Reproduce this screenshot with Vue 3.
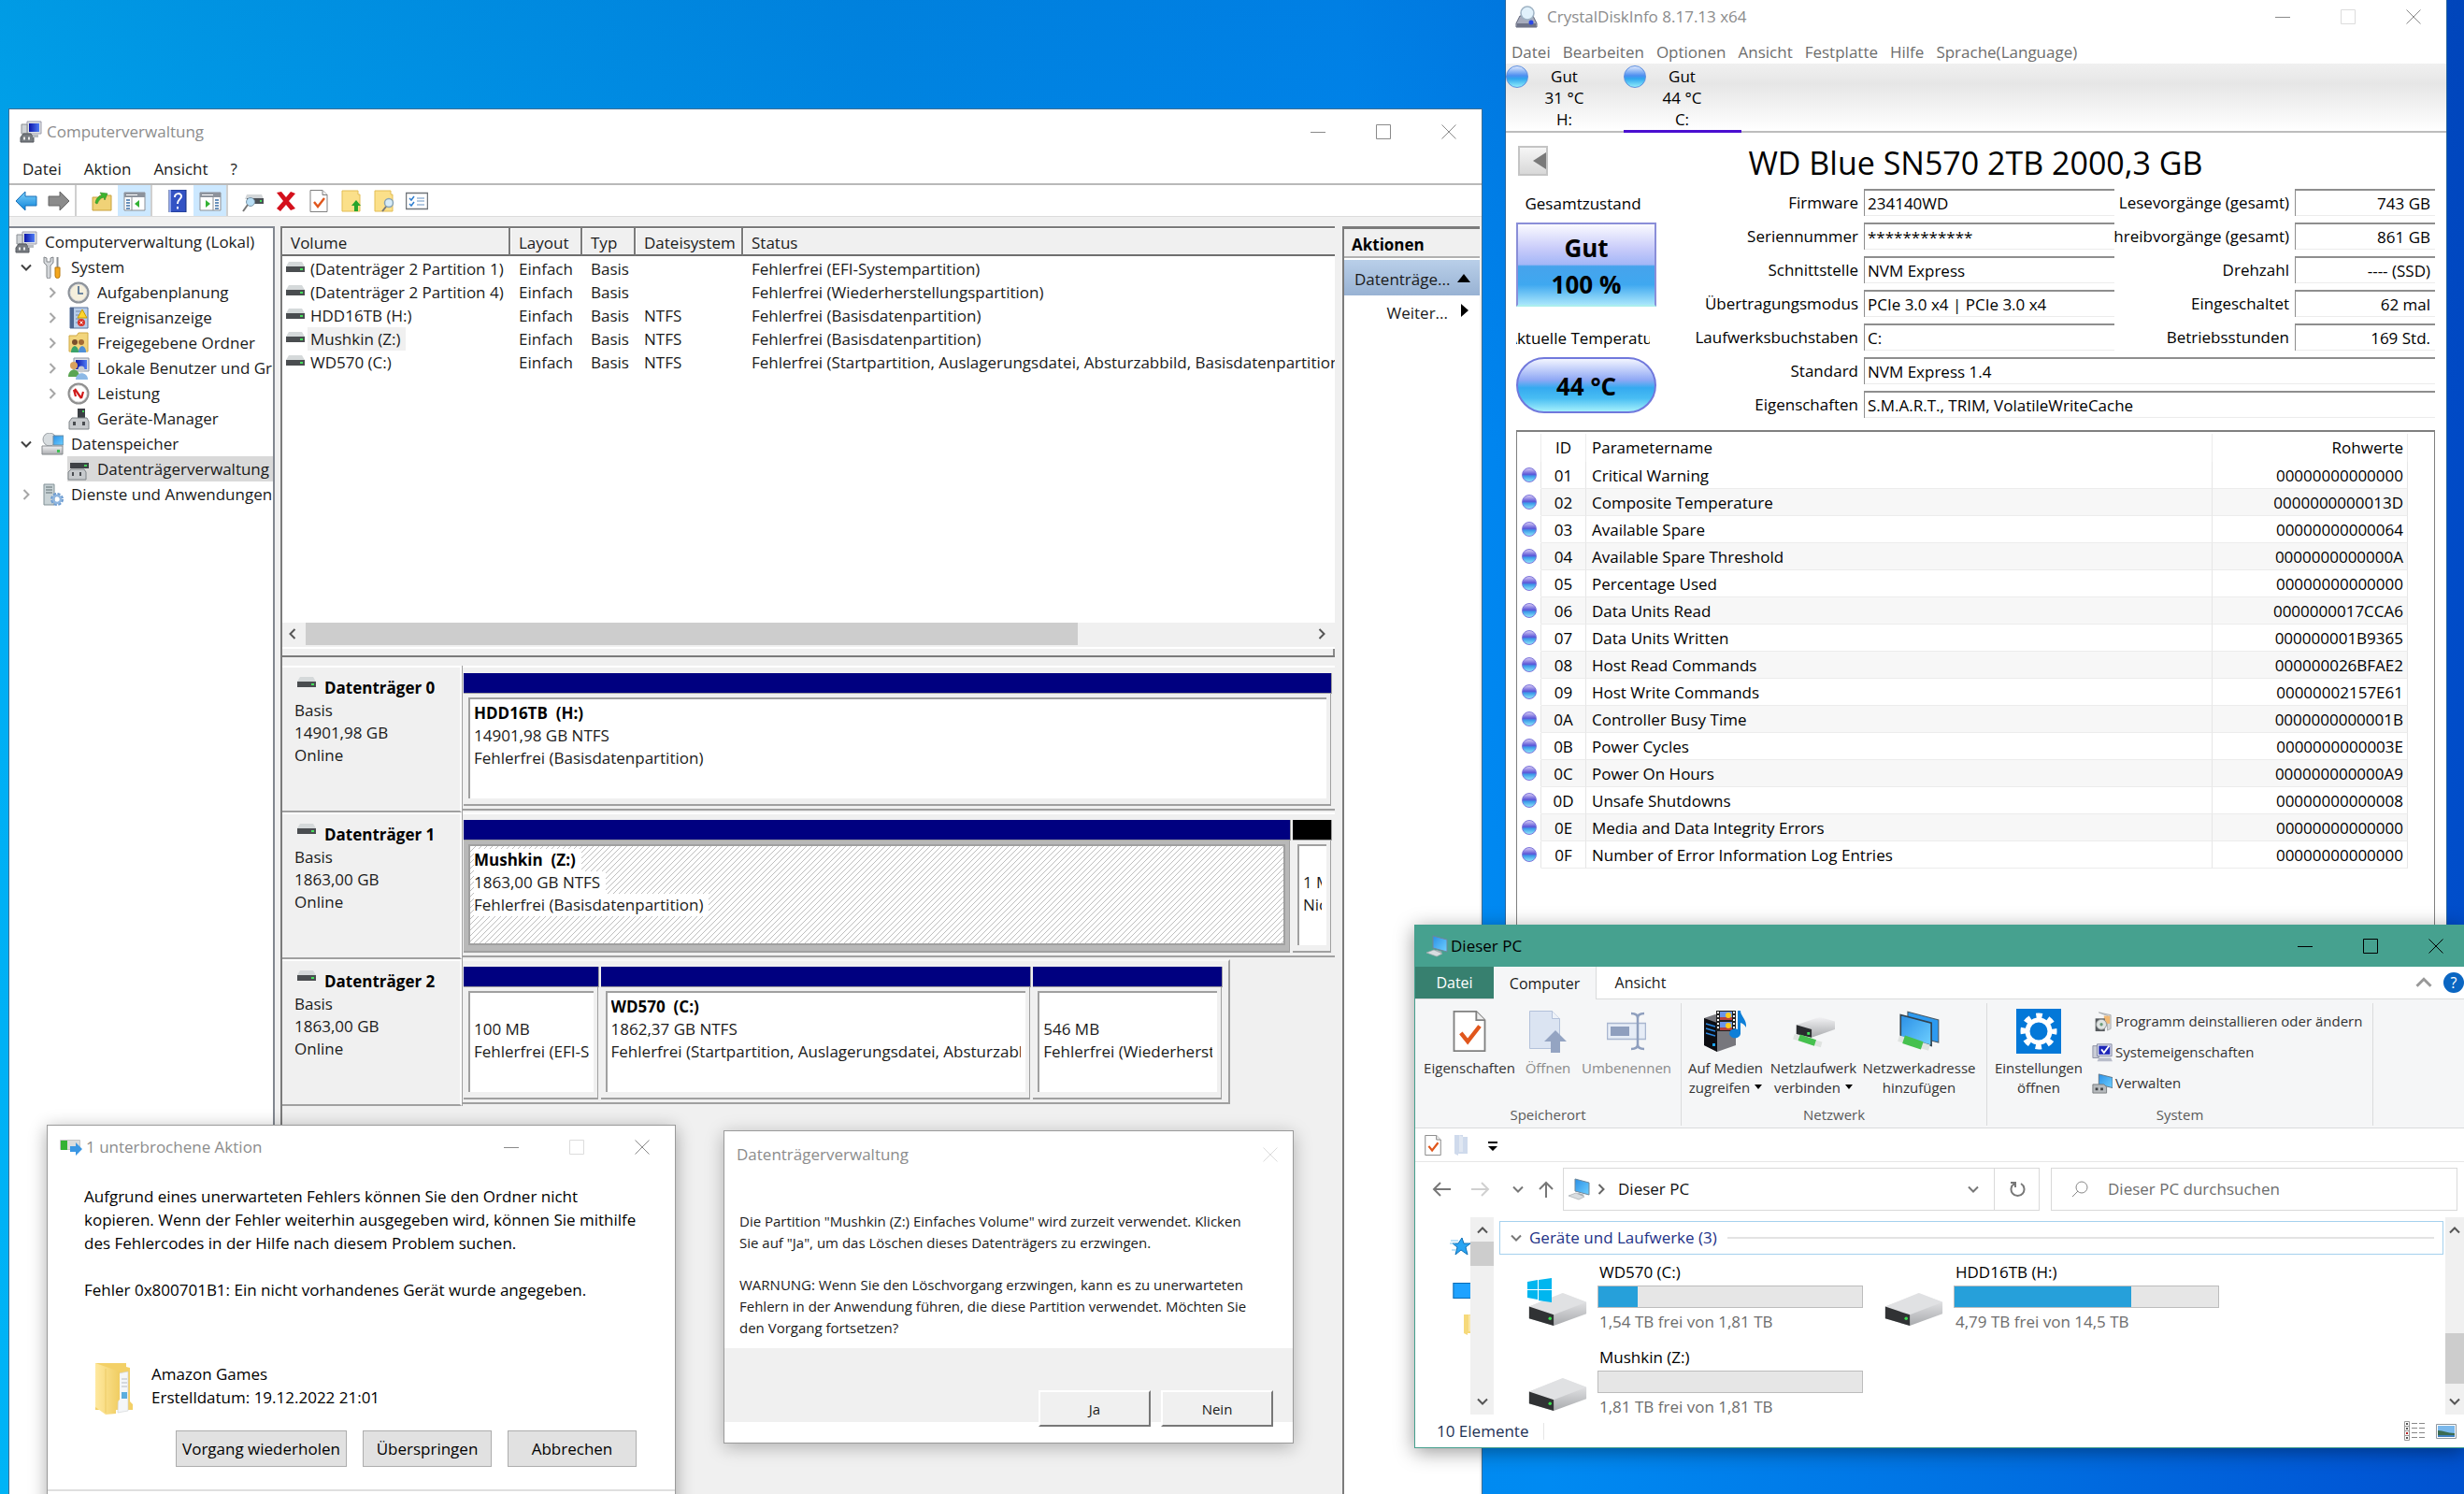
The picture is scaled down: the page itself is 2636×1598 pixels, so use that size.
<script setup>
const toolbar = [
  { icon: 'back', label: 'Zurück' },
  { icon: 'forward', label: 'Vorwärts', end: true },
  { icon: 'folder-up', label: 'Aufwärts' },
  { icon: 'panel-left', label: 'Konsolenstruktur', on: true, end: true },
  { icon: 'help', label: 'Hilfe' },
  { icon: 'panel-right', label: 'Aktionsbereich', on: true, end: true },
  { icon: 'disk-scan', label: 'Datenträger neu einlesen' },
  { icon: 'delete', label: 'Löschen' },
  { icon: 'doc-check', label: 'Eigenschaften' },
  { icon: 'folder-send', label: 'Öffnen' },
  { icon: 'folder-find', label: 'Durchsuchen' },
  { icon: 'checklist', label: 'Einstellungen' },
]

const tree = [
  { text: 'Computerverwaltung (Lokal)', icon: 'pc-manage', level: 0 },
  { text: 'System', icon: 'tools', level: 1, state: 'open' },
  { text: 'Aufgabenplanung', icon: 'clock', level: 2, state: 'closed' },
  { text: 'Ereignisanzeige', icon: 'events', level: 2, state: 'closed' },
  { text: 'Freigegebene Ordner', icon: 'shared', level: 2, state: 'closed' },
  { text: 'Lokale Benutzer und Gruppen', icon: 'users', level: 2, state: 'closed' },
  { text: 'Leistung', icon: 'perf', level: 2, state: 'closed' },
  { text: 'Geräte-Manager', icon: 'devices', level: 2 },
  { text: 'Datenspeicher', icon: 'storage', level: 1, state: 'open' },
  { text: 'Datenträgerverwaltung', icon: 'disk-manage', level: 2, selected: true },
  { text: 'Dienste und Anwendungen', icon: 'services', level: 1, state: 'closed' },
]

const volumes = [
  { name: '(Datenträger 2 Partition 1)', fs: '', status: 'Fehlerfrei (EFI-Systempartition)' },
  { name: '(Datenträger 2 Partition 4)', fs: '', status: 'Fehlerfrei (Wiederherstellungspartition)' },
  { name: 'HDD16TB (H:)', fs: 'NTFS', status: 'Fehlerfrei (Basisdatenpartition)' },
  { name: 'Mushkin (Z:)', fs: 'NTFS', status: 'Fehlerfrei (Basisdatenpartition)', selected: true },
  { name: 'WD570 (C:)', fs: 'NTFS', status: 'Fehlerfrei (Startpartition, Auslagerungsdatei, Absturzabbild, Basisdatenpartition)' },
]

const disks = [
  {
    name: 'Datenträger 0', size: '14901,98 GB', share: 100,
    parts: [{ title: 'HDD16TB  (H:)', size: '14901,98 GB NTFS', state: 'Fehlerfrei (Basisdatenpartition)', grow: 1 }],
  },
  {
    name: 'Datenträger 1', size: '1863,00 GB', share: 100,
    parts: [
      { title: 'Mushkin  (Z:)', size: '1863,00 GB NTFS', state: 'Fehlerfrei (Basisdatenpartition)', grow: 882, active: true },
      { title: '', size: '1 MB', state: 'Nicht zugeordnet', grow: 41, free: true },
    ],
  },
  {
    name: 'Datenträger 2', size: '1863,00 GB', share: 88,
    parts: [
      { title: '', size: '100 MB', state: 'Fehlerfrei (EFI-Systempartition)', grow: 143 },
      { title: 'WD570  (C:)', size: '1862,37 GB NTFS', state: 'Fehlerfrei (Startpartition, Auslagerungsdatei, Absturzabbild)', grow: 458 },
      { title: '', size: '546 MB', state: 'Fehlerfrei (Wiederherstellungspartition)', grow: 201 },
    ],
  },
]

const crystalMenu = ['Datei', 'Bearbeiten', 'Optionen', 'Ansicht', 'Festplatte', 'Hilfe', 'Sprache(Language)']
const crystalDisks = [
  { temp: '31 °C', letter: 'H:' },
  { temp: '44 °C', letter: 'C:', active: true },
]
const facts = [
  { id: 'fw', label: 'Firmware', value: '234140WD', id2: 'rd', label2: 'Lesevorgänge (gesamt)', value2: '743 GB' },
  { id: 'sn', label: 'Seriennummer', value: '************', id2: 'wr', label2: 'Schreibvorgänge (gesamt)', value2: '861 GB' },
  { id: 'if', label: 'Schnittstelle', value: 'NVM Express', id2: 'rpm', label2: 'Drehzahl', value2: '---- (SSD)' },
  { id: 'tm', label: 'Übertragungsmodus', value: 'PCIe 3.0 x4 | PCIe 3.0 x4', id2: 'on', label2: 'Eingeschaltet', value2: '62 mal' },
  { id: 'dl', label: 'Laufwerksbuchstaben', value: 'C:', id2: 'hr', label2: 'Betriebsstunden', value2: '169 Std.' },
  { id: 'std', label: 'Standard', value: 'NVM Express 1.4' },
  { id: 'ft', label: 'Eigenschaften', value: 'S.M.A.R.T., TRIM, VolatileWriteCache' },
]
const smart = [
  ['01', 'Critical Warning', '00000000000000'],
  ['02', 'Composite Temperature', '0000000000013D'],
  ['03', 'Available Spare', '00000000000064'],
  ['04', 'Available Spare Threshold', '0000000000000A'],
  ['05', 'Percentage Used', '00000000000000'],
  ['06', 'Data Units Read', '0000000017CCA6'],
  ['07', 'Data Units Written', '000000001B9365'],
  ['08', 'Host Read Commands', '000000026BFAE2'],
  ['09', 'Host Write Commands', '00000002157E61'],
  ['0A', 'Controller Busy Time', '0000000000001B'],
  ['0B', 'Power Cycles', '0000000000003E'],
  ['0C', 'Power On Hours', '000000000000A9'],
  ['0D', 'Unsafe Shutdowns', '00000000000008'],
  ['0E', 'Media and Data Integrity Errors', '00000000000000'],
  ['0F', 'Number of Error Information Log Entries', '00000000000000'],
]

const drives = [
  { name: 'WD570 (C:)', used: 15, free: '1,54 TB frei von 1,81 TB', system: true },
  { name: 'HDD16TB (H:)', used: 67, free: '4,79 TB frei von 14,5 TB' },
  { name: 'Mushkin (Z:)', used: 0, free: '1,81 TB frei von 1,81 TB' },
]
</script>

<template>
  <div class="desktop">
    <svg class="sprite" aria-hidden="true">
      <defs>
        <linearGradient id="g-blue" x1="0" y1="0" x2="0" y2="1"><stop offset="0" stop-color="#7fd0fa" /><stop offset="1" stop-color="#0b83d9" /></linearGradient>
        <linearGradient id="g-screen" x1="0" y1="0" x2="1" y2="1"><stop offset="0" stop-color="#2a8fe6" /><stop offset="1" stop-color="#6fd0ff" /></linearGradient>
        <linearGradient id="g-navy" x1="0" y1="0" x2="1" y2="0"><stop offset="0" stop-color="#0a12a8" /><stop offset="1" stop-color="#4f7cf5" /></linearGradient>
        <linearGradient id="g-grey" x1="0" y1="0" x2="0" y2="1"><stop offset="0" stop-color="#f3f3f5" /><stop offset="1" stop-color="#a9abae" /></linearGradient>
        <linearGradient id="g-folder" x1="0" y1="0" x2="1" y2="0"><stop offset="0" stop-color="#ffe9a0" /><stop offset="1" stop-color="#f0cd62" /></linearGradient>
      </defs>
      <symbol id="i-min" viewBox="0 0 16 16"><path d="M0 8.5h16" stroke="currentColor" fill="none" /></symbol>
      <symbol id="i-max" viewBox="0 0 16 16"><path d="M.5.5h15v15h-15z" stroke="currentColor" fill="none" /></symbol>
      <symbol id="i-close" viewBox="0 0 16 16"><path d="M.5.5l15 15M15.5.5l-15 15" stroke="currentColor" fill="none" /></symbol>
      <symbol id="i-chev" viewBox="0 0 16 16"><path d="M3 5.5l5 5 5-5" stroke="currentColor" stroke-width="2" fill="none" /></symbol>
      <symbol id="i-back" viewBox="0 0 24 24"><path d="M1 12L11 2v5h12v10H11v5z" fill="url(#g-blue)" stroke="#1a71b8" /></symbol>
      <symbol id="i-forward" viewBox="0 0 24 24"><path d="M23 12L13 2v5H1v10h12v5z" fill="#8b8b8b" stroke="#666" /></symbol>
      <symbol id="i-folder-up" viewBox="0 0 24 24"><path d="M2 8h6l2-2h12v16H2z" fill="#f0d277" stroke="#c9a23c" /><path d="M5 14c1-5 3-7 7-8l-2-3 8 1-3 7-1-3c-4 1-5 3-7 7z" fill="#3cb52e" stroke="#2b8a22" stroke-width=".6" /></symbol>
      <symbol id="i-panel-left" viewBox="0 0 24 24"><path d="M1 3h22v19H1z" fill="#fff" stroke="#8c8f94" /><path d="M1 3h22v5H1z" fill="#8d939c" /><path d="M3 5.500h12" stroke="#fff" /><path d="M3 11h4M3 14h4M3 17h4M3 20h4" stroke="#3a6ea5" stroke-width="1.500" /><path d="M9 8v14" stroke="#8c8f94" /><path d="M17 11v8l-5-4z" fill="#34b233" /></symbol>
      <symbol id="i-panel-right" viewBox="0 0 24 24"><path d="M1 3h22v19H1z" fill="#fff" stroke="#8c8f94" /><path d="M1 3h22v5H1z" fill="#8d939c" /><path d="M3 5.500h12" stroke="#fff" /><path d="M17 11h4M17 14h4M17 17h4M17 20h4" stroke="#3a6ea5" stroke-width="1.500" /><path d="M15 8v14" stroke="#8c8f94" /><path d="M7 11v8l5-4z" fill="#34b233" /></symbol>
      <symbol id="i-help" viewBox="0 0 24 24"><path d="M3 0h18v24H3z" fill="#3353c4" stroke="#16307f" /><path d="M4 0v24" stroke="#8fa5ec" stroke-width="2" /><path d="M9 8c0-5 7-5 7-1 0 3-4 3-4 8M12 18v2.500" stroke="#fff" stroke-width="2" fill="none" /></symbol>
      <symbol id="i-disk-scan" viewBox="0 0 24 24"><path d="M5 5h16l2 5H3z" fill="#d3d6d8" /><path d="M5 9h18v6H5z" fill="#4b5056" /><path d="M19 11h2v2h-2z" fill="#3fe05a" /><circle cx="9" cy="13" r="4.500" fill="#b9def5" stroke="#7d98ab" /><path d="M6 16l-5 7" stroke="#777" stroke-width="2" /></symbol>
      <symbol id="i-delete" viewBox="0 0 24 24"><path d="M2 3l5-1 5 6 5-6 5 2-7 8 7 8-5 2-5-6-6 7-4-3 7-8z" fill="#d4101c" /></symbol>
      <symbol id="i-doc-check" viewBox="0 0 24 24"><path d="M3 .5h13l5 5v18H3z" fill="#fff" stroke="#808080" /><path d="M16 .5v5h5" fill="#eee" stroke="#808080" /><path d="M7 13l4 5 7-9" stroke="#e0561c" stroke-width="2.400" fill="none" /></symbol>
      <symbol id="i-folder-send" viewBox="0 0 24 24"><path d="M2 1h17v4h2v18H2z" fill="#fbe08a" stroke="#e3bd54" /><path d="M17 11l5 6h-3v6h-4v-6h-3z" fill="#27a52b" /></symbol>
      <symbol id="i-folder-find" viewBox="0 0 24 24"><path d="M2 1h17v4h2v18H2z" fill="#fbe08a" stroke="#e3bd54" /><circle cx="17" cy="14" r="4.500" fill="#d7ecf8" stroke="#8aa4b5" stroke-width="1.500" /><path d="M14 18l-4 5" stroke="#777" stroke-width="2" /></symbol>
      <symbol id="i-checklist" viewBox="0 0 24 24"><path d="M.5 3.500h23v17H.5z" fill="#fff" stroke="#70757b" stroke-width="1.500" /><path d="M4 9l2 2 3-4M4 15l2 2 3-4" stroke="#2f7fd0" stroke-width="1.500" fill="none" /><path d="M12 9h8M12 12h8M12 16h8" stroke="#9bb8d8" stroke-width="1.500" /></symbol>
      <symbol id="i-pc-manage" viewBox="0 0 24 24"><path d="M8 1h15v13H8z" fill="#dfe3e6" stroke="#99a" /><path d="M10 3h11v9H10z" fill="url(#g-navy)" /><path d="M2 4h6v10H2z" fill="#cfd3d6" stroke="#8a8f94" /><path d="M4 14h8l3 4v5H1v-5z" fill="#767b80" stroke="#55595e" /><path d="M4 19h2M9 19h2" stroke="#e8e8e8" stroke-width="3" /><path d="M14 15h6v3h-6z" fill="#b9bdc1" /></symbol>
      <symbol id="i-tools" viewBox="0 0 24 24"><path d="M3 1v6l3 3v12a2 2 0 0 0 4 0V10l3-3V1l-3 1v4H6V2z" fill="#d5d8db" stroke="#84888c" /><path d="M17.500 1v11" stroke="#8a8e92" stroke-width="2" /><path d="M15 12h5v9a2.500 2.500 0 0 1-5 0z" fill="#f4a71d" stroke="#b9780d" /></symbol>
      <symbol id="i-clock" viewBox="0 0 24 24"><circle cx="12" cy="12" r="11.500" fill="#8c9299" /><circle cx="12" cy="12" r="9" fill="#f5efdc" stroke="#d9d9d9" /><path d="M12 5v8h5" stroke="#43658d" stroke-width="1.600" fill="none" /></symbol>
      <symbol id="i-events" viewBox="0 0 24 24"><path d="M3 1h19v22H3z" fill="#b7cdea" stroke="#56739c" /><path d="M3 1h4v22H3z" fill="#4d6690" /><path d="M9 5h5M9 9h4M9 13h4M9 17h4" stroke="#7089ad" /><path d="M16 3l5 9H11z" fill="#ffd42e" stroke="#c79b00" /><circle cx="15" cy="17" r="4" fill="#d8342a" /><path d="M13.500 15.500l3 3M16.500 15.500l-3 3" stroke="#fff" /></symbol>
      <symbol id="i-shared" viewBox="0 0 24 24"><path d="M2 4h8l2-3h10v20H2z" fill="#f2d57c" stroke="#cfa945" /><circle cx="8" cy="11" r="3" fill="#7a4f2c" /><circle cx="15" cy="11" r="3" fill="#a36b35" /><path d="M4 22c0-9 8-9 8 0z" fill="#39a36b" /><path d="M12 22c0-9 8-9 8 0z" fill="#4f8fd6" /></symbol>
      <symbol id="i-users" viewBox="0 0 24 24"><path d="M7 1h16v14H7z" fill="#dde1e6" stroke="#8b93a0" /><path d="M9 3h12v10H9z" fill="url(#g-navy)" /><circle cx="7" cy="9" r="4" fill="#d9a15e" /><path d="M1 21c0-10 12-10 12 0z" fill="#5aa552" /><circle cx="15" cy="13" r="3.500" fill="#c9ccd0" /><path d="M9 24c0-9 13-9 13 0z" fill="#8db9e6" /></symbol>
      <symbol id="i-perf" viewBox="0 0 24 24"><circle cx="12" cy="12" r="11.500" fill="#8f8f8f" /><circle cx="12" cy="12" r="9" fill="#fff" stroke="#ddd" /><path d="M7 8l2 7M8 7l7 10M15 17l2-7" stroke="#d01a1a" stroke-width="2.200" fill="none" /></symbol>
      <symbol id="i-devices" viewBox="0 0 24 24"><path d="M11 1h8v10h-8z" fill="#3b3f44" /><path d="M16 3h2v2h-2z" fill="#41d058" /><path d="M2 15l3-4h16l2 4v8H2z" fill="#c7cacd" stroke="#7f8488" /><path d="M6 15h3v4H6zM16 15h3v4h-3z" fill="#4a4d51" /></symbol>
      <symbol id="i-storage" viewBox="0 0 24 24"><circle cx="9" cy="7" r="7" fill="#d7dcdf" stroke="#989ea3" /><path d="M13 3h11v10H13z" fill="url(#g-screen)" stroke="#6d8aa0" /><path d="M1 14h22v9H1z" fill="url(#g-grey)" stroke="#85898d" /><path d="M17 18h3v3h-3z" fill="#3dc052" /></symbol>
      <symbol id="i-disk-manage" viewBox="0 0 24 24"><path d="M5 2h16l2 3H3z" fill="#d0d3d6" /><path d="M3 5h20v6H3z" fill="#3d4146" /><path d="M18 7h3v2h-3z" fill="#41d058" /><path d="M1 15l3-3h14l2 3v8H1z" fill="#c7cacd" stroke="#7f8488" /><path d="M5 15h2v4H5zM13 15h2v4h-2z" fill="#4a4d51" /></symbol>
      <symbol id="i-services" viewBox="0 0 24 24"><path d="M3 1h11v22H3z" fill="#c9d3d6" stroke="#819095" /><path d="M5 4h7M5 7h7M5 10h7" stroke="#5f6e73" /><circle cx="17" cy="17" r="5" fill="none" stroke="#6c9bd0" stroke-width="4" stroke-dasharray="2.600 1.300" /><circle cx="17" cy="17" r="4" fill="none" stroke="#8fb6e0" stroke-width="2.500" /></symbol>
      <symbol id="i-disk" viewBox="0 0 20 12"><path d="M3 0h14l3 5H0z" fill="#d5d9da" /><path d="M0 5h20v6H0z" fill="#4a4d50" /><path d="M15 7h3v2h-3z" fill="#45e05b" /></symbol>
      <symbol id="i-crystal" viewBox="0 0 24 24"><path d="M5 11h14l4 8v4H1v-4z" fill="#a7acbd" stroke="#62677b" /><path d="M2 19h20v4H2z" fill="#6f7488" /><circle cx="13" cy="8" r="7" fill="#e1f1fb" stroke="#9fb3c4" stroke-width="1.500" /><circle cx="17" cy="18" r="2.500" fill="#2b48e6" /></symbol>
      <symbol id="i-this-pc" viewBox="0 0 24 24"><path d="M8 1l15 4v13L8 14z" fill="url(#g-screen)" stroke="#6f8799" /><path d="M12 16l6 2-3 2-6-2z" fill="#a8adb2" /><path d="M1 19l8-3 9 4-6 3z" fill="#d9dde0" stroke="#a4a9ad" stroke-width=".7" /></symbol>
      <symbol id="i-copy" viewBox="0 0 24 18"><path d="M.5 1.500h21v10H.5z" fill="#dcdcdc" stroke="#c4c4c4" /><path d="M1 2h7v10H1z" fill="#35b233" /><path d="M11 8h6V4l7 7-7 7v-4h-6z" fill="#3b97e3" /></symbol>
      <symbol id="i-folder-full" viewBox="0 0 42 56"><path d="M1 1h33v4l4 1v36l3 3v6H1z" fill="#f3d067" /><path d="M26 12l10-2v42l-11 2z" fill="#f4f6f8" stroke="#ccd0d4" stroke-width=".6" /><path d="M29 18h6M29 22h6M29 26h6" stroke="#b5bcc3" /><path d="M29 32h6v7h-6z" fill="#5badde" /><path d="M1 1l26 9v30l-4 4v11l-11 1L1 48z" fill="url(#g-folder)" /><path d="M12 7v47" stroke="#edcb66" /></symbol>
      <symbol id="i-open-doc" viewBox="0 0 40 46"><path d="M.5 1.500h24l8 8v32H.5z" fill="#dbe4f2" stroke="#b3c1da" /><path d="M24.500 1.500v8h8" fill="#eef2f8" stroke="#b3c1da" /><path d="M28 22l12 12h-7v12H23V34h-7z" fill="#94a4c2" /></symbol>
      <symbol id="i-rename" viewBox="0 0 42 42"><path d="M.5 12.500h41v17H.5z" fill="#e6ecf6" stroke="#a9b6d0" stroke-width="1.500" /><path d="M4 16h20v10H4z" fill="#8f9fbe" /><path d="M26 2c4 0 7 1 7 5v28c0 4-3 5-7 5M40 2c-4 0-7 1-7 5v28c0 4 3 5 7 5" fill="none" stroke="#8f9fbe" stroke-width="2.500" /></symbol>
      <symbol id="i-media" viewBox="0 0 46 46"><path d="M0 9l12-4 22 5v28L14 45 0 38z" fill="#77777d" /><path d="M0 9l14 5v31L0 38z" fill="#0c0d12" /><path d="M2 15l10 3M2 20l10 3M2 25l10 3" stroke="#2b87e0" stroke-width="1.500" /><path d="M9 36h3v3H9z" fill="#1aa3ff" /><path d="M13 1h21v22H13z" fill="#222" /><path d="M15 2v20M32 2v20" stroke="#fff" stroke-width="2" stroke-dasharray="2 2" /><path d="M17 2h13v9H17zM17 13h13v9H17z" fill="#6a95e8" /><path d="M17 8h13v3H17zM17 19h13v3H17z" fill="#b8403a" /><circle cx="26" cy="6" r="3" fill="#ffce1d" /><circle cx="26" cy="17" r="3" fill="#ffce1d" /><path d="M36 1h3c0 6 7 9 6 18-2-3-3-4-6-5v12a6 5 0 1 1-3-5z" fill="#0e7fd8" /></symbol>
      <symbol id="i-net-drive" viewBox="0 0 48 38"><path d="M5 12L31 3l17 5v9L22 26 5 22z" fill="url(#g-grey)" /><path d="M5 12l17 5v9L5 22z" fill="#2a2c2f" /><path d="M17 20h3v3h-3z" fill="#43e05a" /><path d="M2 25l31 9" stroke="#dfe3e0" stroke-width="6" /><path d="M8 26l18 6" stroke="#46c14f" stroke-width="7" /></symbol>
      <symbol id="i-net-place" viewBox="0 0 42 40"><path d="M10 1l30 8v22L10 23z" fill="#2d9af0" stroke="#4a5b68" /><path d="M3 4l30 8v22L3 26z" fill="url(#g-screen)" stroke="#31424f" stroke-width="1.500" /><path d="M1 27l30 9" stroke="#dfe3e0" stroke-width="6" /><path d="M6 28l18 6" stroke="#46c14f" stroke-width="8" /></symbol>
      <symbol id="i-gear" viewBox="0 0 48 48"><path d="M0 0h48v48H0z" fill="#0378d8" /><circle cx="24" cy="24" r="12" fill="none" stroke="#fff" stroke-width="5" /><circle cx="24" cy="24" r="16.500" fill="none" stroke="#fff" stroke-width="6" stroke-dasharray="6.480 6.480" stroke-dashoffset="3.200" /></symbol>
      <symbol id="i-uninstall" viewBox="0 0 24 24"><path d="M8 1l14 3v16l-4 2V5z" fill="#d5d7d9" stroke="#95989b" stroke-width=".7" /><path d="M14 5h7v9h-7z" fill="#f0b873" /><path d="M4 8h11v15H4z" fill="#55595d" /><circle cx="11" cy="15" r="6" fill="#dfe3e2" stroke="#8a8f90" /><circle cx="11" cy="15" r="1.800" fill="#6c9b78" /></symbol>
      <symbol id="i-sysprops" viewBox="0 0 24 24"><path d="M1 4h7v14H1z" fill="#c9ccd6" stroke="#8b8fa3" /><path d="M6 2h17v14H6z" fill="#d9dce8" stroke="#7e84a0" /><path d="M8 4h13v10H8z" fill="#1d26b8" /><path d="M11 8l3 4 6-8" stroke="#fff" stroke-width="2" fill="none" /><path d="M8 18h14l2 4H6z" fill="#b9bdca" /></symbol>
      <symbol id="i-manage" viewBox="0 0 24 24"><path d="M8 1l16 4v12L8 13z" fill="url(#g-screen)" stroke="#5c7283" /><path d="M1 13h13l3 3v7H1z" fill="#b6babd" stroke="#75797c" /><path d="M4 17h3v3H4zM10 17h3v3h-3z" fill="#3f4245" /></symbol>
      <symbol id="i-drive" viewBox="0 0 64 36"><path d="M1 15L38 0l26 10v13L28 36 1 28z" fill="url(#g-grey)" /><path d="M1 15L38 0l26 10-36 14z" fill="#e0e1e3" /><path d="M1 15l27 9v12L1 28z" fill="#303234" /><circle cx="24" cy="28" r="1.800" fill="#39e04c" /></symbol>
      <symbol id="i-windows" viewBox="0 0 26 26"><path d="M0 4l11-2v10H0zM12 2l14-2v12H12zM0 13h11v10L0 21zM12 13h14v13l-14-2z" fill="#00b6ef" /></symbol>
      <symbol id="i-star" viewBox="0 0 22 20"><path d="M13 1l2 6h7l-5 4 2 8-7-5-6 5 2-8-5-4h6z" fill="#29a4f2" stroke="#0f71b8" /><path d="M1 4h8M0 7h6M2 14h5" stroke="#7cc4ee" /></symbol>
      <symbol id="i-desk" viewBox="0 0 22 16"><path d="M.5.5h27v15H.5z" fill="#1fa2ff" stroke="#0b6bb5" /></symbol>
      <symbol id="i-mini-folder" viewBox="0 0 14 22"><path d="M0 0h9v2h5v18H4v2l-4-2z" fill="currentColor" /><path d="M9 2v16H5V0" fill="#fff" opacity=".35" /></symbol>
      <symbol id="i-details" viewBox="0 0 22 22"><path d="M.5.5h5v20h-5zM.5 5.500h5M.5 10.500h5M.5 15.500h5" fill="none" stroke="#999" /><path d="M2 3h2M2 8h2M2 18h2" stroke="#555" stroke-width="2" /><path d="M2 13h2" stroke="#b32020" stroke-width="2" /><path d="M8 2.500h6M16 2.500h6M8 7.500h6M16 7.500h6M8 12.500h6M16 12.500h6M8 17.500h6M16 17.500h6" stroke="#888" /></symbol>
      <symbol id="i-thumb" viewBox="0 0 22 16"><path d="M.5.5h21v15H.5z" fill="#fff" stroke="#8f979f" /><path d="M2 2h18v12H2z" fill="#7ab8ec" /><path d="M2 7c6 0 10 3 18 3v4H2z" fill="#3a6b52" /><path d="M2 12h18v2H2z" fill="#3f7fc0" /></symbol>
    </svg>

    <!-- Computerverwaltung -->
    <section class="win mgmt">
      <header class="titlebar">
        <svg class="ic24"><use href="#i-pc-manage" /></svg>
        <span class="title">Computerverwaltung</span>
        <span class="controls">
          <button aria-label="Minimieren"><svg class="ic16"><use href="#i-min" /></svg></button>
          <button aria-label="Maximieren"><svg class="ic16"><use href="#i-max" /></svg></button>
          <button aria-label="Schließen"><svg class="ic16"><use href="#i-close" /></svg></button>
        </span>
      </header>
      <nav class="menubar">
        <button>Datei</button><button>Aktion</button><button>Ansicht</button><button>?</button>
      </nav>
      <div class="toolbar">
        <button v-for="t in toolbar" :key="t.icon" :class="{ on: t.on, end: t.end }" :aria-label="t.label">
          <svg class="ic24"><use :href="'#i-' + t.icon" /></svg>
        </button>
      </div>
      <div class="panes">
        <ul class="tree">
          <li v-for="n in tree" :key="n.text" :class="['lv' + n.level, { selected: n.selected }]">
            <span v-if="n.level" class="twist"><svg v-if="n.state" class="ic16" :class="n.state"><use href="#i-chev" /></svg></span>
            <span class="node"><svg class="ic24"><use :href="'#i-' + n.icon" /></svg><span>{{ n.text }}</span></span>
          </li>
        </ul>
        <div class="center">
          <div class="volumes">
            <table>
              <colgroup><col class="c-vol" /><col class="c-lay" /><col class="c-typ" /><col class="c-fs" /><col /></colgroup>
              <thead><tr><th>Volume</th><th>Layout</th><th>Typ</th><th>Dateisystem</th><th>Status</th></tr></thead>
              <tbody>
                <tr v-for="v in volumes" :key="v.name">
                  <td><svg class="disk"><use href="#i-disk" /></svg><span class="vname" :class="{ picked: v.selected }">{{ v.name }}</span></td>
                  <td>Einfach</td><td>Basis</td><td>{{ v.fs }}</td><td>{{ v.status }}</td>
                </tr>
              </tbody>
            </table>
          </div>
          <div class="hscroll">
            <svg class="ic16 left"><use href="#i-chev" /></svg>
            <span class="track"><span class="thumb"></span></span>
            <svg class="ic16 right"><use href="#i-chev" /></svg>
          </div>
          <div class="split"></div>
          <div class="disks">
            <div v-for="d in disks" :key="d.name" class="diskrow">
              <div class="diskinfo">
                <p class="dname"><svg class="disk"><use href="#i-disk" /></svg><b>{{ d.name }}</b></p>
                <p>Basis</p><p>{{ d.size }}</p><p>Online</p>
              </div>
              <div class="map">
                <div class="parts" :class="{ short: d.share < 100 }" :style="{ width: d.share + '%' }">
                  <div v-for="p in d.parts" :key="p.size" class="part" :class="{ active: p.active, free: p.free }" :style="{ flexGrow: p.grow }">
                    <div class="stripe"></div>
                    <div class="frame">
                      <div class="box">
                        <p><b>{{ p.title }}</b></p><p><span>{{ p.size }}</span></p><p><span>{{ p.state }}</span></p>
                      </div>
                    </div>
                  </div>
                </div>
              </div>
            </div>
          </div>
        </div>
        <aside class="actions">
          <h2>Aktionen</h2>
          <button class="current"><span>Datenträge...</span><i class="up"></i></button>
          <button class="more"><span>Weiter...</span><i class="side"></i></button>
        </aside>
      </div>
    </section>

    <!-- CrystalDiskInfo -->
    <section class="win crystal">
      <header class="titlebar">
        <svg class="ic24"><use href="#i-crystal" /></svg>
        <span class="title">CrystalDiskInfo 8.17.13 x64</span>
        <span class="controls">
          <button aria-label="Minimieren"><svg class="ic16"><use href="#i-min" /></svg></button>
          <button aria-label="Maximieren" disabled><svg class="ic16"><use href="#i-max" /></svg></button>
          <button aria-label="Schließen"><svg class="ic16"><use href="#i-close" /></svg></button>
        </span>
      </header>
      <nav class="menubar"><button v-for="m in crystalMenu" :key="m">{{ m }}</button></nav>
      <div class="tabs">
        <button v-for="d in crystalDisks" :key="d.letter" :class="{ active: d.active }">
          <span class="ball"></span><span class="lines"><span>Gut</span><span>{{ d.temp }}</span><span>{{ d.letter }}</span></span>
        </button>
      </div>
      <div class="cbody">
        <div class="model"><button aria-label="Vorheriger Datenträger"><i></i></button><h1>WD Blue SN570 2TB 2000,3 GB</h1></div>
        <div class="summary">
          <div class="health">
            <p>Gesamtzustand</p>
            <div class="good"><span>Gut</span><span>100 %</span></div>
            <p class="temp-label"><span>Aktuelle Temperatur</span></p>
            <div class="temp">44 °C</div>
          </div>
          <div class="facts">
            <div v-for="f in facts" :key="f.id" class="fact">
              <label :for="f.id"><span>{{ f.label }}</span></label>
              <input :id="f.id" readonly :value="f.value" />
              <template v-if="f.id2">
                <label class="second" :for="f.id2"><span>{{ f.label2 }}</span></label>
                <input :id="f.id2" class="num" readonly :value="f.value2" />
              </template>
            </div>
          </div>
        </div>
        <div class="smart">
          <table>
            <colgroup><col class="s-ic" /><col class="s-id" /><col /><col class="s-raw" /></colgroup>
            <thead><tr><th></th><th>ID</th><th>Parametername</th><th>Rohwerte</th></tr></thead>
            <tbody>
              <tr v-for="s in smart" :key="s[0]">
                <td><span class="dot"></span></td><td>{{ s[0] }}</td><td>{{ s[1] }}</td><td>{{ s[2] }}</td>
              </tr>
            </tbody>
          </table>
        </div>
      </div>
    </section>

    <!-- Unterbrochener Kopiervorgang -->
    <section class="win copy">
      <header class="titlebar">
        <svg class="copyicon"><use href="#i-copy" /></svg>
        <span class="title">1 unterbrochene Aktion</span>
        <span class="controls">
          <button aria-label="Minimieren"><svg class="ic16"><use href="#i-min" /></svg></button>
          <button aria-label="Maximieren" disabled><svg class="ic16"><use href="#i-max" /></svg></button>
          <button aria-label="Schließen"><svg class="ic16"><use href="#i-close" /></svg></button>
        </span>
      </header>
      <div class="message">
        <p>Aufgrund eines unerwarteten Fehlers können Sie den Ordner nicht<br />kopieren. Wenn der Fehler weiterhin ausgegeben wird, können Sie mithilfe<br />des Fehlercodes in der Hilfe nach diesem Problem suchen.</p>
        <p>Fehler 0x800701B1: Ein nicht vorhandenes Gerät wurde angegeben.</p>
      </div>
      <div class="item">
        <svg><use href="#i-folder-full" /></svg>
        <p>Amazon Games<br />Erstelldatum: 19.12.2022 21:01</p>
      </div>
      <div class="buttons"><button class="wide">Vorgang wiederholen</button><button>Überspringen</button><button>Abbrechen</button></div>
      <div class="foot"></div>
    </section>

    <!-- Rückfrage der Datenträgerverwaltung -->
    <section class="win ask">
      <header class="titlebar">
        <span class="title">Datenträgerverwaltung</span>
        <span class="controls"><button aria-label="Schließen" disabled><svg class="ic16"><use href="#i-close" /></svg></button></span>
      </header>
      <div class="message">
        <p>Die Partition "Mushkin (Z:) Einfaches Volume" wird zurzeit verwendet. Klicken<br />Sie auf "Ja", um das Löschen dieses Datenträgers zu erzwingen.</p>
        <p>WARNUNG: Wenn Sie den Löschvorgang erzwingen, kann es zu unerwarteten<br />Fehlern in der Anwendung führen, die diese Partition verwendet. Möchten Sie<br />den Vorgang fortsetzen?</p>
      </div>
      <div class="buttons"><button>Ja</button><button>Nein</button></div>
    </section>

    <!-- Explorer -->
    <section class="win explorer">
      <header class="titlebar">
        <svg class="ic24"><use href="#i-this-pc" /></svg>
        <span class="title">Dieser PC</span>
        <span class="controls">
          <button aria-label="Minimieren"><svg class="ic16"><use href="#i-min" /></svg></button>
          <button aria-label="Maximieren"><svg class="ic16"><use href="#i-max" /></svg></button>
          <button aria-label="Schließen"><svg class="ic16"><use href="#i-close" /></svg></button>
        </span>
      </header>
      <nav class="ribbontabs">
        <button class="file">Datei</button><button class="sel">Computer</button><button class="view">Ansicht</button>
        <svg class="ic24 fold"><use href="#i-chev" /></svg><button class="ask-help" aria-label="Hilfe">?</button>
      </nav>
      <div class="ribbon">
        <div class="group">
          <div class="tools">
            <button class="big w108"><svg class="docbig"><use href="#i-doc-check" /></svg>Eigenschaften</button>
            <button class="big w60" disabled><svg class="openbig"><use href="#i-open-doc" /></svg>Öffnen</button>
            <button class="big w108" disabled><svg class="renbig"><use href="#i-rename" /></svg>Umbenennen</button>
          </div>
          <p>Speicherort</p>
        </div>
        <div class="group">
          <div class="tools">
            <button class="big w86"><svg class="mediabig"><use href="#i-media" /></svg>Auf Medien<span>zugreifen<i></i></span></button>
            <button class="big w102"><svg class="netbig"><use href="#i-net-drive" /></svg>Netzlaufwerk<span>verbinden<i></i></span></button>
            <button class="big w130"><svg class="placebig"><use href="#i-net-place" /></svg>Netzwerkadresse<span>hinzufügen</span></button>
          </div>
          <p>Netzwerk</p>
        </div>
        <div class="group system">
          <div class="tools">
            <button class="big w102"><svg class="gearbig"><use href="#i-gear" /></svg>Einstellungen<span>öffnen</span></button>
            <div class="smalls">
              <button><svg><use href="#i-uninstall" /></svg>Programm deinstallieren oder ändern</button>
              <button><svg><use href="#i-sysprops" /></svg>Systemeigenschaften</button>
              <button><svg><use href="#i-manage" /></svg>Verwalten</button>
            </div>
          </div>
          <p>System</p>
        </div>
      </div>
      <div class="quick">
        <svg class="q1"><use href="#i-doc-check" /></svg><svg class="q2"><use href="#i-mini-folder" /></svg>
        <svg class="q3" viewBox="0 0 10 10"><path d="M0 0h10v2H0zM0 5h10L5 10z" /></svg>
      </div>
      <div class="address">
        <div class="arrows">
          <button aria-label="Zurück"><svg viewBox="0 0 20 16"><path d="M20 8H2M9 1L2 8l7 7" /></svg></button>
          <button aria-label="Vorwärts" disabled><svg viewBox="0 0 20 16"><path d="M0 8h18M11 1l7 7-7 7" /></svg></button>
          <button aria-label="Verlauf" class="hist"><svg class="ic16"><use href="#i-chev" /></svg></button>
          <button aria-label="Nach oben" class="parent"><svg viewBox="0 0 16 18"><path d="M8 18V2M1 9l7-7 7 7" /></svg></button>
        </div>
        <div class="path">
          <svg class="ic24"><use href="#i-this-pc" /></svg><svg class="ic16 sep"><use href="#i-chev" /></svg><span>Dieser PC</span>
          <svg class="ic16 drop"><use href="#i-chev" /></svg>
          <button aria-label="Aktualisieren"><svg viewBox="0 0 18 18"><path d="M6 3a7 7 0 1 0 7 0M2 2h5v5" /></svg></button>
        </div>
        <div class="search">
          <svg viewBox="0 0 18 18"><circle cx="11" cy="7" r="6" /><path d="M7 11l-6 6" /></svg>
          <input aria-label="Dieser PC durchsuchen" placeholder="Dieser PC durchsuchen" />
        </div>
      </div>
      <div class="content">
        <div class="navpane">
          <div class="navicons">
            <svg class="n1"><use href="#i-star" /></svg><svg class="n2"><use href="#i-desk" /></svg><svg class="n3"><use href="#i-mini-folder" /></svg>
          </div>
          <div class="vscroll"><svg class="ic16 up"><use href="#i-chev" /></svg><span class="thumb"></span><svg class="ic16 down"><use href="#i-chev" /></svg></div>
        </div>
        <div class="drivesview">
          <h2><svg class="ic16"><use href="#i-chev" /></svg>Geräte und Laufwerke (3)<span class="rule"></span></h2>
          <div class="drives">
            <div v-for="d in drives" :key="d.name" class="drive">
              <div class="pic"><svg v-if="d.system" class="winlogo"><use href="#i-windows" /></svg><svg class="hdd"><use href="#i-drive" /></svg></div>
              <div class="info"><p>{{ d.name }}</p><div class="bar"><span :style="{ width: d.used + '%' }"></span></div><p class="free">{{ d.free }}</p></div>
            </div>
          </div>
        </div>
        <div class="vscroll main"><svg class="ic16 up"><use href="#i-chev" /></svg><span class="thumb"></span><svg class="ic16 down"><use href="#i-chev" /></svg></div>
      </div>
      <footer><span>10 Elemente</span><svg class="v1"><use href="#i-details" /></svg><svg class="v2"><use href="#i-thumb" /></svg></footer>
    </section>
  </div>
</template>

<style>
body { margin: 0; }
</style>

<style scoped>
* { box-sizing: border-box; }
.desktop {
  position: relative;
  height: 100vh;
  overflow: hidden;
  font: 17px/24px "Open Sans", "Noto Sans", sans-serif;
  color: #1a1a1a;
  background:
    linear-gradient(rgba(0, 60, 140, 0.14), rgba(0, 60, 150, 0) 30%),
    linear-gradient(82deg, #00b4f6 0%, #00a2f0 15%, #008cea 40%, #008af2 58%, #0070e2 75%, #0058d6 88%, #0046c2 100%);
}
.sprite { position: absolute; width: 0; height: 0; }
p, h1, h2, ul { margin: 0; padding: 0; }
button, input { font: inherit; color: inherit; background: none; border: 0; padding: 0; margin: 0; }
svg { flex: none; display: block; }
.ic24 { width: 24px; height: 24px; }
.ic16 { width: 16px; height: 16px; }
.win { position: absolute; display: flex; flex-direction: column; background: #fff; overflow: hidden; }
.titlebar { display: flex; align-items: center; flex: none; color: #8c8c8c; }
.title { flex: 1; white-space: nowrap; }
.controls { display: flex; color: #8a8a8a; }
.controls button { width: 70px; height: 24px; display: flex; align-items: center; justify-content: center; }
.controls button:disabled { color: #dcdcdc; }
.menubar { display: flex; flex: none; }

/* Computerverwaltung */
.mgmt { left: 9px; right: 1050px; top: 116px; bottom: 0; border: 1px solid #3f6f94; border-bottom: 0; }
.mgmt .titlebar { height: 47px; padding: 0 0 0 11px; gap: 5px; }
.mgmt .menubar { height: 34px; padding: 1px 0 0 14px; gap: 24px; align-items: center; border-bottom: 2px solid #b9b9b9; }
.toolbar { display: flex; flex: none; height: 34px; border-bottom: 1px solid #dcdcdc; }
.toolbar button { width: 35px; height: 33px; display: flex; align-items: center; justify-content: center; }
.toolbar .on { background: #cce8ff; }
.toolbar .end { margin-right: 11px; box-shadow: 2px 0 #d0d0d0; }
.panes { flex: 1; display: flex; min-height: 0; padding: 10px 2px 0 0; background: #f0f0f0; }
.tree { flex: none; width: 284px; list-style: none; background: #fff; border: solid #828790; border-width: 2px 2px 0 0; overflow: hidden; padding-top: 1px; }
.tree li { display: flex; height: 27px; line-height: 26px; white-space: nowrap; }
.tree .lv0 { padding-left: 6px; }
.tree .lv1 { padding-left: 8px; }
.tree .lv2 { padding-left: 36px; }
.twist { flex: none; width: 26px; display: flex; align-items: center; padding-left: 2px; color: #404040; }
.twist .closed { transform: rotate(-90deg); color: #a6a6a6; }
.node { display: flex; align-items: center; gap: 8px; flex: 1; }
.selected .node { background: #d9d9d9; }
.center { flex: 1; min-width: 0; margin: 0 8px 0 6px; border: solid #7b7b7b; border-width: 2px 0 0 2px; display: flex; flex-direction: column; }
.volumes { flex: none; height: 422px; background: #fff; overflow: hidden; }
.volumes table { table-layout: fixed; width: 100%; border-collapse: separate; border-spacing: 0; white-space: nowrap; }
.c-vol { width: 244px; }
.c-lay { width: 77px; }
.c-typ { width: 57px; }
.c-fs { width: 115px; }
.volumes th { height: 30px; padding: 4px 0 0 9px; text-align: left; font-weight: 400; line-height: 24px; background: #f0f0f0; border-right: 2px solid #7b7b7b; border-bottom: 2px solid #6e6e6e; box-shadow: inset 1px 1px #fff; }
.volumes th:last-child { border-right: 0; }
.volumes td { padding: 0 0 0 9px; height: 25px; line-height: 25px; overflow: hidden; }
.volumes tbody tr:first-child td { padding-top: 1px; }
.volumes td:first-child { padding-left: 4px; }
.disk { width: 20px; height: 12px; display: inline-block; }
.volumes .disk { margin-right: 3px; vertical-align: 2px; }
.vname { display: inline-block; padding: 0 5px 0 3px; }
.picked { background: #f0f0f0; }
.hscroll { flex: none; height: 26px; display: flex; align-items: center; padding: 0 6px 2px 3px; color: #555; }
.hscroll .left { transform: rotate(90deg); }
.hscroll .right { transform: rotate(-90deg); }
.track { flex: 1; padding: 0 6px; }
.hscroll .thumb { display: block; width: 77%; height: 24px; background: #cdcdcd; }
.split { flex: none; height: 11px; border-top: 2px solid #fff; border-bottom: 2px solid #7b7b7b; box-shadow: inset -2px 0 #8a8a8a; }
.disks { padding-top: 9px; }
.diskrow { display: flex; height: 157px; }
.diskinfo { flex: none; width: 192px; padding: 10px 0 0 13px; border: 2px solid #fff; border-left: 0; border-bottom-color: #a0a0a0; box-shadow: 1px 0 #a0a0a0; }
.dname { display: flex; gap: 9px; padding-left: 3px; color: #000; }
.map { flex: 1; min-width: 0; padding: 0 0 2px 1px; }
.parts { display: flex; gap: 3px; height: 155px; padding: 6px 4px 0 1px; border-top: 2px solid #fff; border-bottom: 2px solid #a0a0a0; }
.short { border-right: 2px solid #a0a0a0; border-top-color: #f8f8f8; padding-right: 7px; }
.part { flex: 1 1 0; min-width: 0; display: flex; flex-direction: column; height: 142px; }
.stripe { height: 22px; background: #000080; border-bottom: 1px solid #a0a0a0; box-shadow: 1px 0 #a0a0a0; }
.free .stripe { background: #000; }
.frame { flex: 1; min-height: 0; padding: 4px 4px 6px 5px; border-right: 1px solid #a0a0a0; border-bottom: 2px solid #a0a0a0; }
.active .frame { background: #b8b8b8; }
.box { height: 100%; overflow: hidden; padding: 3px 5px 0 4px; background: #fff; border: solid #a0a0a0; border-width: 2px 0 0 2px; white-space: pre; }
.box p { height: 24px; overflow: hidden; color: #1a1a1a; }
.box b { color: #000; }
.active .box { background: linear-gradient(135deg, #fff 42%, #bdbdbd 50%, #fff 58%) 0 0 / 6px 6px; border-width: 2px; }
.active .box b, .active .box span { display: inline-block; height: 24px; padding-right: 6px; background: #fff; }
.actions { flex: none; width: 147px; background: #fff; border: solid #7b7b7b; border-width: 3px 0 0 2px; }
.actions h2 { height: 31px; padding: 5px 0 0 8px; background: #f0f0f0; border-bottom: 2px solid #b0b0b0; font: 700 17px/24px "Open Sans", "Noto Sans", sans-serif; color: #000; }
.actions button { display: flex; align-items: center; width: 100%; height: 38px; justify-content: flex-end; }
.actions .current { margin-top: 2px; background: linear-gradient(#b9cfe9, #98b2d3); }
.actions .current span { flex: 1; padding: 4px 0 0 11px; text-align: left; }
.up { border: 7px solid transparent; border-top: 0; border-bottom: 9px solid #000; }
.actions .up { margin-right: 10px; }
.side { border: 7px solid transparent; border-right: 0; border-left: 8px solid #000; margin: 0 12px 6px 14px; }

/* CrystalDiskInfo */
.crystal { left: 1610px; right: 18px; top: 0; bottom: 80px; border: solid #28649c; border-width: 0 1px; }
.crystal .titlebar { height: 36px; padding: 0 0 0 10px; gap: 10px; }
.crystal .menubar { height: 32px; padding: 8px 0 0 6px; gap: 13px; color: #6d6d6d; }
.tabs { flex: none; display: flex; height: 74px; border-bottom: 2px solid #bdbdbd; background: linear-gradient(#f0f0f0, #e6e6e6 30%, #fff); }
.tabs button { display: flex; width: 126px; height: 74px; padding-top: 2px; color: #000; }
.tabs .active { border-bottom: 3px solid #4a0fd0; }
.ball { width: 24px; height: 24px; border-radius: 50%; border: 1px solid #5d8fe0; background: linear-gradient(#dfe8fc, #4d8ff0 45%, #2fa6ee 60%, #8fecfa); }
.lines { display: flex; flex-direction: column; width: 77px; line-height: 23px; text-align: center; }
.cbody { flex: 1; display: flex; flex-direction: column; padding: 14px 12px 0 11px; color: #000; min-height: 0; }
.model { display: flex; align-items: center; height: 32px; margin-bottom: 14px; }
.model button { width: 32px; height: 32px; margin-left: 2px; background: linear-gradient(#f6f6f6, #d8d8d8); border: 2px solid #c4c4c4; }
.model i { display: block; border: 9px solid transparent; border-left: 0; border-right: 14px solid #7a7a7a; margin-left: 5px; }
.model h1 { flex: 1; text-align: center; font: 400 34px/40px "Open Sans", "Noto Sans", sans-serif; padding: 3px 34px 0 0; }
.summary { display: flex; }
.health { flex: none; width: 150px; }
.health p { height: 36px; display: flex; justify-content: center; line-height: 31px; padding-right: 7px; white-space: nowrap; }
.good { height: 90px; border: 2px solid #8a8ed8; border-bottom-color: #aee; display: flex; flex-direction: column; text-align: center; font: 700 26px/39px "Open Sans", "Noto Sans", sans-serif; padding-top: 6px; background: linear-gradient(#fafaff, #c9ccfa 30%, #a3b6f7 50%, #46a3ec 52%, #3fa8f0 75%, #a9e6fb); }
.health .temp-label { width: 143px; height: 54px; padding: 18px 0 0; overflow: hidden; }
.temp-label span { flex: none; }
.temp { height: 60px; border-radius: 30px; border: 2px solid #7078dc; font: 700 26px/58px "Open Sans", "Noto Sans", sans-serif; text-align: center; background: linear-gradient(#f3f5ff, #8fa8f5 40%, #35aaf0 55%, #48bdf3 75%, #a4f0fc); }
.facts { flex: 1; display: flex; flex-direction: column; gap: 7px; min-width: 0; }
.fact { display: flex; height: 29px; }
.fact label { flex: none; width: 222px; display: flex; justify-content: flex-end; padding: 3px 6px 0 0; white-space: nowrap; overflow: hidden; }
.fact .second { width: 193px; }
.fact input { flex: 1; min-width: 0; padding: 1px 5px 0 3px; border: solid #8e8e8e; border-width: 2px 0 0 1px; box-shadow: inset 0 -1px #ececec; color: #000; }
.fact .num { flex: none; width: 150px; text-align: right; }
.smart { flex: 1; margin-top: 13px; padding: 2px 28px 0 0; border: solid #808080; border-width: 2px 1px 0; }
.smart table { table-layout: fixed; width: 100%; border-collapse: separate; border-spacing: 0; white-space: nowrap; }
.s-ic { width: 26px; }
.s-id { width: 48px; }
.s-raw { width: 209px; }
.smart th { height: 30px; padding: 0 6px; font-weight: 400; text-align: left; border-right: 1px solid #ececec; }
.smart td { height: 29px; padding: 3px 6px 2px; border-right: 1px solid #e6e6e6; border-bottom: 1px solid #ececec; line-height: 23px; }
.smart td:first-child { padding: 0 5px; border-bottom-color: #fff; }
.smart tr > :nth-child(2) { text-align: center; padding-left: 0; padding-right: 0; }
.smart tr > :nth-child(4) { text-align: right; padding-right: 4px; }
.smart tbody tr:nth-child(even) td:not(:first-child) { background: #f7f7f7; }
.dot { display: block; width: 16px; height: 16px; border-radius: 50%; border: 1px solid #7b74dc; background: linear-gradient(#d5c8f4, #5b56d8 45%, #3d9bea 60%, #8fe6f8); }

/* Dialoge */
.copy { left: 50px; width: 673px; top: 1203px; border: 1px solid #9a9a9a; box-shadow: 0 4px 18px #0005; color: #000; }
.copy .titlebar { height: 46px; padding-left: 13px; gap: 4px; }
.copyicon { width: 24px; height: 18px; }
.copy .message { padding: 17px 0 0 39px; line-height: 25px; white-space: nowrap; }
.copy .message p { margin-bottom: 25px; }
.item { display: flex; gap: 19px; padding: 40px 0 0 50px; line-height: 25px; }
.item svg { width: 42px; height: 56px; }
.copy .buttons { display: flex; justify-content: flex-end; gap: 17px; padding: 17px 41px 24px 0; }
.copy .buttons button { width: 138px; height: 39px; background: #e1e1e1; border: 1px solid #adadad; white-space: nowrap; }
.copy .buttons .wide { width: 183px; }
.foot { height: 40px; border-top: 2px solid #dfdfdf; }
.ask { left: 774px; width: 610px; top: 1209px; border: 1px solid #9a9a9a; box-shadow: 0 4px 18px #0004; }
.ask .titlebar { height: 49px; padding-left: 13px; }
.ask .controls button { width: 48px; }
.ask .message { height: 183px; padding: 36px 0 0 16px; font-size: 15px; line-height: 23px; white-space: nowrap; }
.ask .message p { margin-bottom: 22px; }
.ask .buttons { flex: none; display: flex; justify-content: flex-end; gap: 11px; height: 101px; padding: 45px 21px 0 0; background: linear-gradient(#f0f0f0 79px, #fff 79px); font-size: 15px; }
.ask .buttons button { width: 120px; height: 39px; background: #f0f0f0; border: 2px solid #fff; border-right-color: #777; border-bottom-color: #777; }

/* Explorer */
.explorer { left: 1513px; right: 0; top: 989px; height: 560px; border: 1px solid #459f8d; border-right: 0; border-top: 0; box-shadow: 0 4px 20px #0006; }
.explorer .titlebar { height: 45px; padding: 1px 0 0 11px; gap: 3px; background: #46a18f; color: #000; }
.explorer .controls { color: #000; margin-right: -5px; }
.ribbontabs { flex: none; display: flex; height: 35px; font-size: 16px; border-bottom: 1px solid #dadbdc; }
.ribbontabs button { width: 110px; height: 34px; }
.ribbontabs .file { width: 84px; background: #37806f; color: #fff; }
.ribbontabs .sel { background: #f5f6f7; border-right: 1px solid #dadbdc; height: 35px; }
.ribbontabs .view { width: 94px; }
.fold { margin: 5px 9px 0 auto; transform: rotate(180deg); color: #999; }
.ribbontabs .ask-help { width: 22px; height: 22px; margin-top: 6px; border-radius: 50%; background: #0a66c2; color: #fff; line-height: 22px; }
.ribbon { flex: none; display: flex; height: 138px; padding: 4px 0 2px; background: #f5f6f7; border-bottom: 1px solid #dadbdc; font-size: 15px; line-height: 21px; color: #333; }
.group { display: flex; flex-direction: column; justify-content: space-between; border-right: 1px solid #dadbdc; padding: 6px 4px 1px; }
.system { width: 413px; }
.group p { text-align: center; color: #5a5a5a; line-height: 21px; }
.tools { display: flex; }
.big { display: flex; flex-direction: column; align-items: center; white-space: nowrap; height: 96px; }
.big:disabled { color: #8a8a8a; }
.big svg { margin: 1px 0 6px; height: 46px; width: 46px; }
.big .docbig { width: 44px; height: 44px; margin: 2px 0 7px; }
.big .openbig { width: 40px; }
.big .renbig { width: 42px; }
.big .gearbig { width: 48px; height: 48px; margin: 0 0 5px; }
.big i { display: inline-block; border: 4px solid transparent; border-top: 5px solid #000; border-bottom: 0; margin: 0 0 4px 5px; }
.w60 { width: 60px; }
.w86 { width: 86px; }
.w102 { width: 102px; }
.w108 { width: 108px; }
.w130 { width: 130px; padding-right: 6px; }
.smalls { display: flex; flex-direction: column; padding: 0 0 0 6px; }
.smalls button { display: flex; align-items: center; gap: 3px; height: 33px; padding-bottom: 6px; white-space: nowrap; }
.smalls svg { width: 22px; height: 22px; }
.quick { flex: none; display: flex; align-items: center; height: 36px; padding-left: 8px; border-bottom: 1px solid #e6e6e6; }
.q1 { width: 22px; height: 22px; }
.q2 { width: 14px; height: 22px; margin-left: 12px; color: #cfdaec; }
.q3 { width: 10px; height: 10px; margin: 3px 0 0 22px; }
.address { flex: none; display: flex; height: 59px; padding: 6px 7px 7px 0; }
.arrows { flex: none; display: flex; align-items: center; width: 158px; padding-left: 18px; }
.arrows button { width: 42px; color: #777; display: flex; }
.arrows button:disabled { color: #d0d0d0; }
.arrows .hist { width: 28px; }
.arrows .parent { width: 20px; }
.arrows button svg:not(.ic16) { width: 20px; height: 18px; fill: none; stroke: currentColor; stroke-width: 2; }
.path { flex: none; width: 510px; display: flex; align-items: center; border: 1px solid #d9d9d9; padding-left: 4px; color: #111; }
.sep { transform: rotate(-90deg); margin: 0 10px 0 4px; color: #666; }
.drop { margin: 0 14px 0 auto; color: #777; }
.path button { width: 48px; height: 44px; border-left: 1px solid #d9d9d9; display: flex; align-items: center; justify-content: center; }
.path button svg { width: 18px; height: 18px; fill: none; stroke: #777; stroke-width: 2; }
.search { flex: 1; display: flex; align-items: center; gap: 21px; margin-left: 12px; border: 1px solid #d9d9d9; padding-left: 21px; }
.search svg { width: 18px; height: 20px; fill: none; stroke: #888; }
.search input { flex: 1; min-width: 0; }
.search input::placeholder { color: #6d6d6d; opacity: 1; }
.content { flex: none; display: flex; height: 211px; overflow: hidden; }
.navpane { flex: none; display: flex; width: 84px; }
.navicons { width: 59px; padding: 21px 0 0 37px; overflow: hidden; }
.n1 { width: 22px; height: 20px; }
.n2 { width: 30px; height: 17px; margin-top: 29px; }
.n3 { width: 14px; height: 22px; margin: 17px 0 0 15px; color: #f6d97a; }
.vscroll { flex: none; width: 25px; display: flex; flex-direction: column; align-items: center; background: #f0f0f0; padding: 6px 0; color: #555; }
.vscroll .up { transform: rotate(180deg); border: 0; }
.vscroll .thumb { width: 100%; height: 26px; margin-top: 4px; background: #cdcdcd; }
.vscroll .down { margin-top: auto; }
.vscroll.main { width: 20px; }
.main .thumb { height: 54px; margin-top: 102px; }
.drivesview { flex: 1; min-width: 0; padding: 4px 2px 0 6px; }
.drivesview h2 { display: flex; align-items: center; height: 36px; border: 1px solid #a5d1ee; padding: 0 9px 0 9px; font: 400 17px/24px "Open Sans", "Noto Sans", sans-serif; color: #1e3287; }
.drivesview h2 svg { color: #777; margin-right: 6px; }
.rule { flex: 1; height: 2px; margin-left: 11px; background: #e3e3e3; }
.drives { display: grid; grid-template-columns: 381px 381px; }
.drive { display: flex; height: 91px; padding: 7px 0 0 30px; }
.pic { width: 75px; display: flex; flex-direction: column; justify-content: flex-end; height: 69px; flex: none; }
.hdd { width: 64px; height: 35px; }
.winlogo { width: 26px; height: 26px; margin-bottom: -10px; position: relative; }
.info { flex: none; }
.info p { padding-left: 2px; color: #000; }
.info .free { color: #6d6d6d; line-height: 30px; }
.bar { width: 284px; height: 24px; background: #e6e6e6; border: 1px solid #bcbcbc; margin-top: 2px; }
.bar span { display: block; height: 100%; background: #26a0da; }
.explorer footer { flex: 1; display: flex; align-items: center; padding: 0 8px 0 23px; color: #1e3255; }
.explorer footer span { padding-right: 16px; border-right: 1px solid #e6e6e6; line-height: 18px; }
.v1 { width: 22px; height: 22px; margin-left: auto; }
.v2 { width: 22px; height: 16px; margin-left: 12px; }
</style>
